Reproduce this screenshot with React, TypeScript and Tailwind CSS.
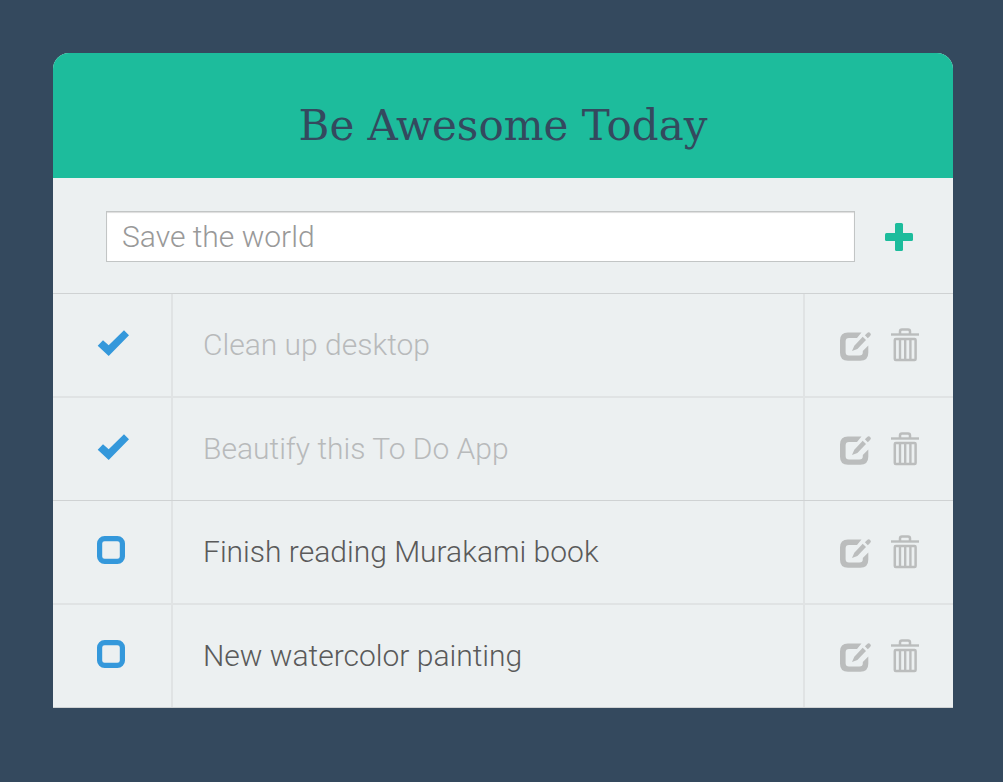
import { useState } from "react";

type Task = { id: number; title: string; done: boolean };

const initialTasks: Task[] = [
  { id: 1, title: "Clean up desktop", done: true },
  { id: 2, title: "Beautify this To Do App", done: true },
  { id: 3, title: "Finish reading Murakami book", done: false },
  { id: 4, title: "New watercolor painting", done: false },
];

function PlusIcon() {
  return (
    <svg viewBox="0 0 28 28" className="size-7 fill-current" aria-hidden="true">
      <rect x="0" y="10" width="28" height="8" rx="1.5" />
      <rect x="10" y="0" width="8" height="28" rx="1.5" />
    </svg>
  );
}

function CheckIcon() {
  return (
    <svg viewBox="0 0 32 28" className="h-7 w-8 fill-current" aria-hidden="true">
      <path d="M0.7 16.7 6 11.3l5.7 5L27 1.3 32 6.3 11.7 27Z" />
    </svg>
  );
}

function BoxIcon() {
  return (
    <svg viewBox="0 0 32 28" className="h-7 w-8" aria-hidden="true">
      <rect x="2.6" y="2.6" width="22.8" height="22.8" rx="5" fill="none" stroke="currentColor" strokeWidth="5.2" />
    </svg>
  );
}

function EditIcon() {
  return (
    <svg viewBox="0 -3.5 32 32" className="size-8 fill-current" aria-hidden="true">
      <path d="M8 0H21.5L17 5.6H9Q5.6 5.6 5.6 9V19.500Q5.600 23 9 23H19.500Q22.800 23 22.800 19.700V18.500L28.300 13V20.300Q28.300 28.300 20.300 28.300H8Q0 28.300 0 20.300V8Q0 0 8 0Z" />
      <path d="M12 18.600 14.300 13.200 22.700 4.300 26 7.600 17.400 16.400Z" />
      <path d="M24.900 2.700 27.200.4Q28.700-.900 30.200.400T30.100 3.400L27.800 5.700Z" />
    </svg>
  );
}

function TrashIcon() {
  return (
    <svg viewBox="0 0 28 34" className="h-[34px] w-7 fill-none stroke-current" aria-hidden="true">
      <path d="M0 6.500H28" strokeWidth="2.400" />
      <path d="M9 6V3.500Q9 1.500 11 1.500H17Q19 1.500 19 3.500V6" strokeWidth="2.500" />
      <rect x="3.800" y="11" width="20.800" height="21" rx="1" strokeWidth="2.500" />
      <path d="M9 11V32M14.200 11V32M19.400 11V32" strokeWidth="2.400" />
    </svg>
  );
}

export default function App() {
  const [tasks, setTasks] = useState(initialTasks);
  const [draft, setDraft] = useState("");

  const toggle = (id: number) =>
    setTasks(tasks.map((t) => (t.id === id ? { ...t, done: !t.done } : t)));
  const remove = (id: number) => setTasks(tasks.filter((t) => t.id !== id));
  const add = () => {
    if (!draft.trim()) return;
    setTasks([...tasks, { id: Date.now(), title: draft.trim(), done: false }]);
    setDraft("");
  };

  return (
    <div className="min-h-screen bg-[#34495e] pt-[53px] pr-[50px] pb-16 pl-[53px] font-[Roboto,sans-serif] font-light">
      <main className="overflow-hidden rounded-t-2xl bg-[#ecf0f1]">
        <header className="bg-[#1dbc9c] px-8 pt-[45px] pb-6 text-center">
          <h1 className="font-['Roboto_Slab','DejaVu_Serif',serif] text-[42px] leading-14 font-normal text-[#34495e]">
            Be Awesome Today
          </h1>
        </header>
        <form
          className="flex items-center gap-[30px] pt-[33px] pr-10 pb-[31px] pl-[53px]"
          onSubmit={(e) => {
            e.preventDefault();
            add();
          }}
        >
          <input
            type="text"
            aria-label="New task"
            placeholder="Save the world"
            value={draft}
            onChange={(e) => setDraft(e.target.value)}
            className="h-[51px] min-w-0 flex-1 border border-[#c2c5c5] bg-white px-[15px] text-[30px] text-[#606060] shadow-[inset_0_1px_1px_#dddddd] outline-none placeholder:text-[#999]"
          />
          <button type="submit" aria-label="Add task" className="text-[#1dbc9c]">
            <PlusIcon />
          </button>
        </form>
        <ul className="border-b border-[#cfd2d3]">
          {tasks.map((task) => (
            <li
              key={task.id}
              className="flex odd:border-t odd:border-[#cfd2d3] even:border-t-2 even:border-[#e0e3e4]"
            >
              <div className="flex w-[118px] shrink-0 items-center justify-center pb-1 pl-[2px]">
                <label className="cursor-pointer text-[#3498db]">
                  <input
                    type="checkbox"
                    aria-label={task.title}
                    checked={task.done}
                    onChange={() => toggle(task.id)}
                    className="sr-only"
                  />
                  {task.done ? <CheckIcon /> : <BoxIcon />}
                </label>
              </div>
              <p
                className={
                  task.done
                    ? "min-w-0 flex-1 border-x-2 border-[#e0e3e4] px-[30px] py-8 text-[30px] leading-[38px] text-[#b8babb]"
                    : "min-w-0 flex-1 border-x-2 border-[#e0e3e4] px-[30px] py-8 text-[30px] leading-[38px] text-[#5a5a5a]"
                }
              >
                {task.title}
              </p>
              <div className="flex w-[148px] shrink-0 items-center justify-center gap-[19px] text-[#bbbdbd]">
                <button type="button" aria-label={"Edit " + task.title}>
                  <EditIcon />
                </button>
                <button type="button" aria-label={"Delete " + task.title} onClick={() => remove(task.id)}>
                  <TrashIcon />
                </button>
              </div>
            </li>
          ))}
        </ul>
      </main>
    </div>
  );
}
